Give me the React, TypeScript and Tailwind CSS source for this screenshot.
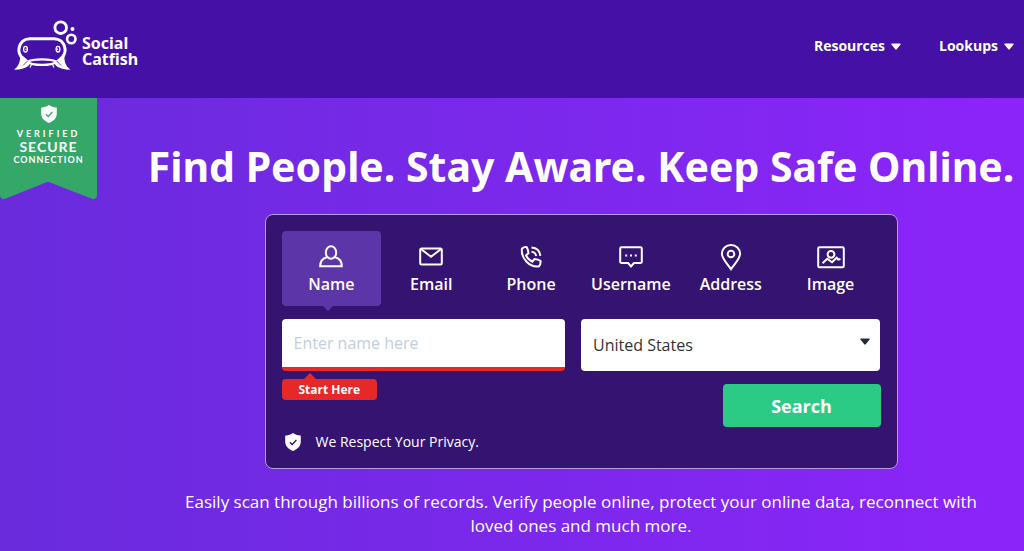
import type { ReactNode } from 'react'

type IconProps = { className?: string }

function Caret({ className = '' }: IconProps) {
  return (
    <svg viewBox="0 0 10 7" className={className} fill="currentColor" aria-hidden="true">
      <path d="M1 .4h8c.7 0 1 .7.6 1.2L5.7 6.2a.9.9 0 0 1-1.4 0L.4 1.600C0 1.100.3.4 1 .4z" />
    </svg>
  )
}

function Shield({ className = '', check }: IconProps & { check: string }) {
  return (
    <svg viewBox="0 0 16 18" className={className} aria-hidden="true">
      <path d="M8 0c2 1.500 4.700 2.300 7.300 2.500.3 0 .5.2.5.5v5.500c0 4.300-3 7.700-7.800 9.500C3.200 16.200.2 12.800.2 8.500V3c0-.3.2-.5.5-.5C3.300 2.300 6 1.500 8 0z" fill="#fff" />
      <path d="M4.800 9.200 7.200 11.500 11.400 7" fill="none" stroke={check} strokeWidth="1.300" />
    </svg>
  )
}

function Logo() {
  return (
    <svg viewBox="0 0 66 52" className="h-[52px] w-[66px]" fill="none" stroke="#fff" aria-hidden="true">
      <circle cx="46.700" cy="8.700" r="5.800" strokeWidth="2.800" />
      <circle cx="57.300" cy="20" r="4.200" strokeWidth="2.600" />
      <circle cx="58.500" cy="10" r="2" fill="#fff" stroke="none" />
      <path d="M8.500 39C5.500 36 4.500 32.500 5 29.500 6 23 10.500 19.700 16 19.700h24c5.500 0 10 3.300 11 9.800.5 3-.5 6.500-3.500 9.500" strokeWidth="3" />
      <path d="M6 36.500C6.500 42 5 47 0 50.700c6.500-.2 11-1.200 14.500-4l2-3.200L9.500 37.500z" fill="#fff" stroke="none" />
      <path d="M50.500 36.500C50 42 51.500 47 56.500 50.700c-6.500-.2-11-1.200-14.500-4l-2-3.200 7-6z" fill="#fff" stroke="none" />
      <path d="M13.500 43c5-3.500 24-3.500 29 0-5 3.800-24 3.800-29 0z" strokeWidth="2.200" />
      <path d="M14 44.500 11.500 48M17.500 45.500 16 48.500M38.500 45.500l1.500 3M42 44.500l2.500 3.500" strokeWidth="1.200" />
      <path d="M13.500 42 9 46.500M42.700 42l4.500 4.500" stroke="#4510a6" strokeWidth=".8" />
      <ellipse cx="11.500" cy="30.200" rx="1.900" ry="2.800" strokeWidth="1.300" />
      <ellipse cx="44" cy="30.200" rx="1.900" ry="2.800" strokeWidth="1.300" />
      <circle cx="12" cy="30.200" r=".8" fill="#fff" stroke="none" />
      <circle cx="43.500" cy="30.200" r=".8" fill="#fff" stroke="none" />
    </svg>
  )
}

const tabs: { label: string; icon: ReactNode }[] = [
  {
    label: 'Name',
    icon: (
      <>
        <ellipse cx="14" cy="9.500" rx="5.200" ry="6.300" />
        <path d="M10 14.200C5.500 15.300 3.200 18 3.200 23.200h21.600c0-5.200-2.300-7.900-6.800-9" />
      </>
    ),
  },
  {
    label: 'Email',
    icon: (
      <>
        <rect x="3.200" y="5.500" width="21.600" height="16" rx="1.500" />
        <path d="M4.200 6.200 14 13.700l9.800-7.500" />
      </>
    ),
  },
  {
    label: 'Phone',
    icon: (
      <>
        <path d="M5 5.500c1.500-1.200 3.300-1.700 4.800-1.200.8 1.600 1.400 3.600 1.700 5.800l-2.500 2.300c1.300 3 3.300 5 6.200 6.300l2.300-2.600c2.200.2 4.300.7 6 1.700.3 1.900-.2 4-1.500 5.500C13 24.800 3.500 15.500 5 5.500z" />
        <path d="M14.500 8.700c2.700.3 4.300 2 4.700 4.400M14.500 4.500c5 .3 8.300 3.600 8.800 8.400" />
      </>
    ),
  },
  {
    label: 'Username',
    icon: (
      <>
        <path d="M4.500 4.200h19c.8 0 1.300.5 1.300 1.300v13.200c0 .8-.5 1.300-1.300 1.300h-6.600L14 23.500 11.100 20H4.500c-.8 0-1.300-.5-1.300-1.300V5.500c0-.8.500-1.300 1.300-1.300z" />
        <path d="M8.200 12.500h2M13 12.500h2M17.800 12.500h2" />
      </>
    ),
  },
  {
    label: 'Address',
    icon: (
      <>
        <path d="M14 26.200C10.500 21 4.900 15.700 4.900 10.800a9.100 8.900 0 0 1 18.200 0c0 4.900-5.600 10.200-9.100 15.400z" />
        <circle cx="14" cy="11" r="3.300" />
      </>
    ),
  },
  {
    label: 'Image',
    icon: (
      <>
        <rect x="1.200" y="4.200" width="25.600" height="20" rx="1.200" />
        <circle cx="14" cy="11.300" r="3.400" />
        <path d="m5.500 20.200 4.700-4.400 4.800 3.500 4.700-4.600 1.500 2 2.300-.7" />
      </>
    ),
  },
]

export default function App() {
  return (
    <div className="flex min-h-screen flex-col bg-linear-to-r from-[#692bdc] to-[#8c24fa] font-['Open_Sans','Noto_Sans',sans-serif] text-white">
      <header className="flex h-[98px] items-center justify-between bg-[#4510a6] pr-[10px] pl-[14px]">
        <a href="#home" className="mb-2 flex items-end gap-[2px]">
          <Logo />
          <span className="flex flex-col pb-1 font-['Noto_Sans',sans-serif] text-base leading-4 font-bold">
            <span>Social</span>
            <span>Catfish</span>
          </span>
        </a>
        <nav className="mb-[6px] flex gap-[38px] text-sm font-bold">
          <button type="button" className="flex items-center gap-[6px]">
            Resources
            <Caret className="h-[7px] w-[10px]" />
          </button>
          <button type="button" className="flex items-center gap-[6px]">
            Lookups
            <Caret className="h-[7px] w-[10px]" />
          </button>
        </nav>
      </header>

      <div className="flex flex-1 items-start">
        <aside className="relative h-[101px] w-[97px] shrink-0">
          <svg viewBox="0 0 97 101" className="absolute inset-0 h-full w-full" aria-hidden="true">
            <path d="M0 0h97v97c0 3-2.500 4.700-5 3.700L50 84.500c-1.500-.6-2.500-.6-4 0L5 100.700c-2.500 1-5-.7-5-3.700z" fill="#35a869" />
          </svg>
          <div className="relative flex flex-col items-center pt-[7px] text-center font-['Lato',sans-serif]">
            <Shield className="mb-1 h-[18px] w-4" check="#35a869" />
            <span className="text-[9px] leading-[13px] font-bold tracking-[3px]">VERIFIED</span>
            <span className="text-sm leading-[13px] font-bold tracking-[1px]">SECURE</span>
            <span className="text-[9px] leading-[13px] font-bold tracking-[1px]">CONNECTION</span>
          </div>
        </aside>

        <main className="flex min-w-0 flex-1 flex-col items-center pt-[38px] pl-[41px]">
          <h1 className="text-center font-['Noto_Sans',sans-serif] text-[41px] leading-[60px] font-bold whitespace-nowrap">
            Find People. Stay Aware. Keep Safe Online.
          </h1>

          <form
            className="mt-[18px] w-full max-w-[633px] rounded-lg border border-[#b59be0] bg-[#351371] p-4"
            onSubmit={(event) => event.preventDefault()}
          >
            <div className="grid grid-cols-6" role="tablist">
              {tabs.map((tab, index) => (
                <button
                  key={tab.label}
                  type="button"
                  role="tab"
                  aria-selected={index === 0}
                  className={
                    index === 0
                      ? 'relative flex h-[75px] flex-col items-center rounded bg-[#5c35a8] pt-3'
                      : 'flex h-[75px] flex-col items-center pt-3'
                  }
                >
                  <svg viewBox="0 0 28 28" className="size-7" fill="none" stroke="#fff" strokeWidth="2" aria-hidden="true">
                    {tab.icon}
                  </svg>
                  <span className="text-base leading-[26px] font-semibold">{tab.label}</span>
                  {index === 0 && (
                    <svg viewBox="0 0 10 5" className="absolute top-full left-[41px] h-[5px] w-[10px]" aria-hidden="true">
                      <path d="M0 0h10L5 5z" fill="#5c35a8" />
                    </svg>
                  )}
                </button>
              ))}
            </div>

            <div className="mt-[13px] grid grid-cols-[283fr_299fr] gap-4">
              <input
                type="text"
                aria-label="Name"
                placeholder="Enter name here"
                className="h-[52px] w-full rounded border-b-4 border-[#e62828] bg-white px-3 text-base text-[#222] outline-none placeholder:text-[#c3cddd]"
              />
              <div className="relative">
                <select
                  aria-label="Country"
                  className="h-[52px] w-full appearance-none rounded bg-white px-3 text-base text-[#333]"
                >
                  <option>United States</option>
                </select>
                <Caret className="pointer-events-none absolute top-[19px] right-[10px] h-[7px] w-[10px] text-[#222b3c]" />
              </div>
            </div>

            <div className="mt-2 flex items-start justify-between">
              <div className="relative h-[21px] rounded-sm bg-[#e62828] px-[17px] text-xs leading-[21px] font-bold">
                <svg viewBox="0 0 12 6" className="absolute bottom-full left-[22px] h-[6px] w-3" aria-hidden="true">
                  <path d="M0 6h12L6 0z" fill="#e62828" />
                </svg>
                Start Here
              </div>
              <button type="submit" className="mt-[5px] h-[43px] w-[158px] rounded bg-[#2ccb85] text-lg font-bold">
                Search
              </button>
            </div>

            <p className="mt-[5px] flex items-center gap-[15px] pl-[3px] text-sm leading-5">
              <Shield className="h-[18px] w-4" check="#351371" />
              We Respect Your Privacy.
            </p>
          </form>

          <p className="mt-[21px] max-w-[800px] text-center text-[17px] leading-6">
            Easily scan through billions of records. Verify people online, protect your online data, reconnect with
            loved ones and much more.
          </p>
        </main>
      </div>
    </div>
  )
}
